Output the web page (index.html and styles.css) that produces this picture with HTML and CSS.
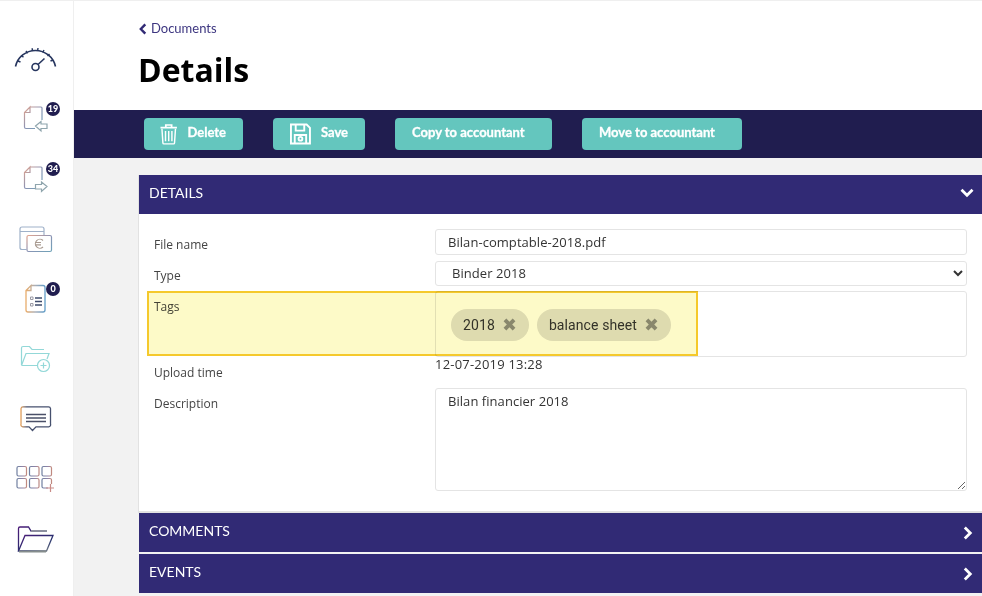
FILE: index.html
```html
<!DOCTYPE html>
<html lang="en">
<head>
<meta charset="utf-8">
<title>Details</title>
<link rel="stylesheet" href="styles.css">
</head>
<body>
<svg class="defs" width="0" height="0" aria-hidden="true">
  <defs>
    <linearGradient id="g1" x1="0" y1="0" x2="1" y2="1"><stop offset="0" stop-color="#e2a48e"/><stop offset=".5" stop-color="#8b93b4"/><stop offset="1" stop-color="#6fa2b8"/></linearGradient>
    <linearGradient id="g2" x1="0" y1="0" x2="1" y2="0"><stop offset="0" stop-color="#e8a35c"/><stop offset=".2" stop-color="#46506e"/><stop offset="1" stop-color="#46506e"/></linearGradient>
    <linearGradient id="g3" x1="0" y1="0" x2="1" y2="0"><stop offset="0" stop-color="#6f7fa0"/><stop offset=".6" stop-color="#8f84a8"/><stop offset="1" stop-color="#c08a80"/></linearGradient>
    <linearGradient id="g4" x1="0" y1="0" x2="1" y2="1"><stop offset="0" stop-color="#4b1a78"/><stop offset=".6" stop-color="#26316e"/><stop offset="1" stop-color="#7f8888"/></linearGradient>
    <linearGradient id="g5" x1="0" y1="0" x2="1" y2="0"><stop offset="0" stop-color="#e9ac6a"/><stop offset=".5" stop-color="#a9aeb8"/><stop offset="1" stop-color="#5f9cc8"/></linearGradient>
  </defs>
</svg>
<aside class="rail">
  <a class="slot">
    <svg class="ico" viewBox="0 28 74 60" fill="none" stroke="#27365f" stroke-width="1.400">
      <path d="M15.500 66.500A20.500 20.500 0 0 1 55.500 66.500" stroke-width="1.600"/>
      <path d="M18 61l2.500 1M21 55.500l2.500 1.700M26 51l1.500 2.300M32 48.300l.7 2.700M38 48l-.4 2.800M44 50l-1.300 2.500M49.500 54l-2 2M53 60l-2.500 1"/>
      <circle cx="35.500" cy="67" r="3.500" stroke-width="1.600"/>
      <path d="M38 64.500L44.500 58.500" stroke-width="1.600"/>
    </svg>
  </a>
  <a class="slot">
    <svg class="ico" viewBox="0 88 74 60" fill="none" stroke="url(#g1)" stroke-width="1.200">
      <path d="M30 107H41a1 1 0 0 1 1 1V120M35 128.500H26a1.500 1.500 0 0 1-1.500-1.500V112.500L30 107V112.500H24.500"/>
      <path d="M35.500 126L41 121.500V124H47V128.500H41V131Z" stroke="#8fa5ad"/>
    </svg>
    <span class="count">19</span>
  </a>
  <a class="slot">
    <svg class="ico" viewBox="0 148 74 60" fill="none" stroke="url(#g1)" stroke-width="1.200">
      <path d="M30 167H41a1 1 0 0 1 1 1V180M35 188.500H26a1.500 1.500 0 0 1-1.500-1.500V172.500L30 167V172.500H24.500"/>
      <path d="M47 186.500L41.500 182V184.500H35.500V189H41.500V191.500Z" stroke="#8fa5ad"/>
    </svg>
    <span class="count">34</span>
  </a>
  <a class="slot">
    <svg class="ico" viewBox="0 208 74 60" fill="none" stroke-width="1.200">
      <path d="M26.500 249.500H22a2 2 0 0 1-2-2V229a2 2 0 0 1 2-2H42a2 2 0 0 1 2 2V235M20.500 231.500H44" stroke="#9fb1c9"/>
      <rect x="27" y="235.500" width="24.500" height="16" rx="1.500" stroke="url(#g1)"/>
      <path d="M43 240.500a4.500 4.500 0 1 0 0 6.500M35 242.500H41M35 244.800H41" stroke="#a89a90"/>
    </svg>
  </a>
  <a class="slot">
    <svg class="ico" viewBox="0 268 74 60" fill="none" stroke="url(#g5)" stroke-width="1.300">
      <path d="M31 285.500H43a2 2 0 0 1 2 2V310a2 2 0 0 1-2 2H28a2 2 0 0 1-2-2V290.500L31 285.500V290.500H26"/>
      <path d="M30.500 297h2.500v2.500h-2.500zM30.500 303.500h2.500v2.500h-2.500z" stroke="#9a9aa4" stroke-width="1"/>
      <path d="M35 298H42M35 301.500H42M35 305H42" stroke="#3f4c6c"/>
    </svg>
    <span class="count">0</span>
  </a>
  <a class="slot">
    <svg class="ico" viewBox="0 328 74 60" fill="none" stroke="#93d8d8" stroke-width="1.200">
      <path d="M21.500 365V348a1.500 1.500 0 0 1 1.500-1.500H29.500L32 349.500H44M21.500 365.500L26 353.500H49L47 359M21.500 365.500H37"/>
      <circle cx="43.500" cy="365.500" r="6"/>
      <path d="M40.500 365.500H46.500M43.500 362.500V368.500"/>
    </svg>
  </a>
  <a class="slot">
    <svg class="ico" viewBox="0 388 74 60" fill="none" stroke-width="1.300">
      <path d="M21 408.500A2 2 0 0 1 23 406.800H48.500A2 2 0 0 1 50.500 408.500V424A2 2 0 0 1 48.500 426.800H36L32.500 430.500L29 426.800H23A2 2 0 0 1 21 424Z" stroke="url(#g2)"/>
      <path d="M26 414.500H46M26 418H46M26 421.500H46" stroke="#4a5068"/>
    </svg>
  </a>
  <a class="slot">
    <svg class="ico" viewBox="0 448 74 60" fill="none" stroke="url(#g3)" stroke-width="1.200">
      <rect x="17" y="466.500" width="9.500" height="9.500" rx="1.500"/>
      <rect x="29.500" y="466.500" width="9.500" height="9.500" rx="1.500"/>
      <rect x="42" y="466.500" width="9.500" height="9.500" rx="1.500"/>
      <rect x="17" y="478.500" width="9.500" height="9.500" rx="1.500"/>
      <rect x="29.500" y="478.500" width="9.500" height="9.500" rx="1.500"/>
      <path d="M48 488H43.500A1.500 1.500 0 0 1 42 486.500V480A1.500 1.500 0 0 1 43.500 478.500H50A1.500 1.500 0 0 1 51.500 480V484"/>
      <path d="M46 488H54M50.500 484V492" stroke="#c98c88"/>
    </svg>
  </a>
  <a class="slot">
    <svg class="ico" viewBox="0 508 74 60" fill="none" stroke="url(#g4)" stroke-width="1.300">
      <path d="M18.500 551V528.500A1.500 1.500 0 0 1 20 527H28.500L31 531H47" />
      <path d="M18.500 551L25 535.500H53L46.500 551Z"/>
      <path d="M19 551.500H46" stroke="#858d8c" stroke-width="2"/>
      <path d="M31 531H47" stroke="#9a9ea2" stroke-width="1.500"/>
    </svg>
  </a>
</aside>

<main class="page">
  <header class="head">
    <a class="back">
      <svg class="back-ico" viewBox="0 0 8 12" aria-hidden="true"><path d="M6.300 1.300L1.800 6L6.300 10.700" fill="none" stroke="#312a75" stroke-width="2.400"/></svg>
      Documents
    </a>
    <h1 class="title">Details</h1>
  </header>

  <div class="toolbar">
    <button class="btn btn-delete" type="button">
      <svg class="btn-ico" viewBox="0 0 18 22" fill="none" stroke="#fff" stroke-width="1.500" aria-hidden="true">
        <path d="M.5 4.500H17.500M6 4V1.700H12V4" stroke-width="1.800"/>
        <path d="M2 5.500L3 20.300A1 1 0 0 0 4 21.200H14A1 1 0 0 0 15 20.300L16 5.500"/>
        <path d="M5.700 8V18.500M9 8V18.500M12.300 8V18.500"/>
      </svg>
      <span class="btn-label">Delete</span>
    </button>
    <button class="btn btn-save" type="button">
      <svg class="btn-ico" viewBox="0 0 22 22" fill="none" stroke="#fff" stroke-width="2" aria-hidden="true">
        <path d="M1 1H17.500L21 4.500V21H1Z"/>
        <path d="M6 1V7.500H15V1M5 21V12H17V21"/>
        <circle cx="11" cy="16" r="2"/>
      </svg>
      <span class="btn-label">Save</span>
    </button>
    <button class="btn btn-copy" type="button"><span class="btn-label">Copy to accountant</span></button>
    <button class="btn btn-move" type="button"><span class="btn-label">Move to accountant</span></button>
  </div>

  <div class="content">
    <section class="panel">
      <div class="bar">
        <span class="bar-label">DETAILS</span>
        <svg class="chev-down" viewBox="0 0 14 10" aria-hidden="true"><path d="M1.500 1.800L7 7.300L12.500 1.800" fill="none" stroke="#fff" stroke-width="2.800"/></svg>
      </div>
      <div class="form">
        <label class="lab">File name</label>
        <input class="field input" type="text" value="Bilan-comptable-2018.pdf">
        <label class="lab lab-type">Type</label>
        <select class="field select"><option>Binder 2018</option></select>
        <label class="lab">Tags</label>
        <div class="field tags">
          <span class="tag">2018<svg class="x" viewBox="0 0 12 12" aria-hidden="true"><path d="M1.800 1.800L10.200 10.200M10.200 1.800L1.800 10.200" stroke="#8a8a8a" stroke-width="3.600"/></svg></span>
          <span class="tag">balance sheet<svg class="x" viewBox="0 0 12 12" aria-hidden="true"><path d="M1.800 1.800L10.200 10.200M10.200 1.800L1.800 10.200" stroke="#8a8a8a" stroke-width="3.600"/></svg></span>
        </div>
        <label class="lab">Upload time</label>
        <div class="value">12-07-2019 13:28</div>
        <label class="lab">Description</label>
        <textarea class="field area">Bilan financier 2018</textarea>
      </div>
    </section>
    <div class="bar bar-c">
      <span class="bar-label">COMMENTS</span>
      <svg class="chev-right" viewBox="0 0 10 14" aria-hidden="true"><path d="M1.800 1.500L7.300 7L1.800 12.500" fill="none" stroke="#fff" stroke-width="2.800"/></svg>
    </div>
    <div class="bar bar-e">
      <span class="bar-label">EVENTS</span>
      <svg class="chev-right" viewBox="0 0 10 14" aria-hidden="true"><path d="M1.800 1.500L7.300 7L1.800 12.500" fill="none" stroke="#fff" stroke-width="2.800"/></svg>
    </div>
  </div>
</main>
<div class="highlight"></div>
</body>
</html>
```

FILE: styles.css
```css
* { box-sizing: border-box; }
html, body { height: 100%; }
body {
  margin: 0;
  display: flex;
  height: 596px;
  overflow: hidden;
  background: #f2f2f2;
  font-family: "Open Sans", sans-serif;
  color: #333;
}
.defs { position: absolute; }

.rail {
  flex: 0 0 74px;
  width: 74px;
  min-width: 0;
  background: #fff;
  border-right: 1px solid #efefef;
  border-top: 1px solid #efefef;
  padding-top: 27px;
  display: flex;
  flex-direction: column;
  overflow: visible;
}
.slot { display: block; position: relative; height: 60px; width: 73px; flex: 0 0 60px; }
.ico { display: block; width: 74px; height: 60px; overflow: visible; }
.count {
  position: absolute;
  left: 46px;
  top: 14px;
  width: 14px;
  height: 14px;
  border-radius: 50%;
  background: #201d4f;
  color: #fff;
  font: 900 9px/14px Lato, sans-serif;
  text-align: center;
}

.page { flex: 1; min-width: 0; display: flex; flex-direction: column; }
.head {
  height: 110px;
  background: #fff;
  border-top: 1px solid #efefef;
  padding: 19px 0 0 65px;
}
.back {
  display: flex;
  align-items: center;
  gap: 4px;
  font: 13px/17px Lato, sans-serif;
  color: #3d3680;
}
.back-ico { width: 8px; height: 12px; }
.title {
  margin: 11px 0 0 -1px;
  font: 700 32px/44px "Open Sans", sans-serif;
  color: #000;
}

.toolbar {
  height: 48px;
  background: #201d4f;
  padding: 8px 0 0 70px;
  display: flex;
  gap: 30px;
  align-items: flex-start;
}
.btn {
  height: 32px;
  border: 0;
  border-radius: 4px;
  background: #64c6be;
  color: #fff;
  font: 700 13px/32px Lato, sans-serif;
  -webkit-text-stroke: .3px #fff;
  display: flex;
  align-items: center;
  padding: 0 17px;
}
.btn-label { position: relative; top: -2px; }
.btn-delete { width: 99px; padding-left: 16px; gap: 10px; }
.btn-save { width: 92px; padding-left: 17px; gap: 10px; }
.btn-delete .btn-ico { width: 18px; height: 22px; }
.btn-save .btn-ico { width: 22px; height: 22px; }
.btn-copy { width: 157px; }
.btn-move { width: 160px; }

.content { padding: 17px 0 0 64px; }
.panel { background: #fff; border-left: 1px solid #e2e2e2; }
.bar {
  height: 39px;
  background: #312a75;
  color: #fff;
  display: flex;
  align-items: center;
  justify-content: space-between;
  padding: 0 8px 0 10px;
  font: 14px/18px Lato, sans-serif;
}
.bar-label { margin-top: -3px; }
.chev-down { width: 14px; height: 10px; margin-top: -3px; }
.chev-right { width: 10px; height: 14px; margin-right: 1px; }
.bar-c, .bar-e { margin-left: 1px; }

.form {
  display: grid;
  grid-template-columns: 281px 532px;
  grid-template-rows: 32px 30px 66px 31px 103px;
  padding: 15px 0 0 15px;
  border-bottom: 2px solid #e2e2e2;
  height: 299px;
  align-content: start;
  align-items: start;
}
.lab { font: 12px/17px "Open Sans", sans-serif; color: #444; padding-top: 7px; }
.lab-type { padding-top: 6px; }
.field {
  width: 532px;
  border: 1px solid #e4e4e4;
  border-radius: 3px;
  background: #fff;
  font: 13px/20px "Open Sans", sans-serif;
  letter-spacing: .05px;
  color: #333;
  padding: 0 12px;
  margin: 0;
  outline: 0;
}
.input { height: 26px; padding-bottom: 1px; }
.select { height: 25px; padding-bottom: 2px; }
.tags { height: 66px; display: flex; align-items: center; gap: 8px; padding: 1px 15px 0; }
.tag {
  height: 32px;
  border-radius: 16px;
  background: #e0e0e0;
  display: flex;
  align-items: center;
  gap: 8px;
  padding: 0 13px 0 12px;
  font: 14px/32px Roboto, sans-serif;
  letter-spacing: .1px;
  color: #333;
}
.x { width: 13px; height: 13px; }
.value {
  font: 13px/17px "Open Sans", sans-serif;
  letter-spacing: .2px;
  color: #333;
  margin-top: -1px;
}
.area { height: 103px; padding-top: 2px; resize: vertical; display: block; }

.bar-e { margin-top: 2px; }

.highlight {
  position: absolute;
  left: 147px;
  top: 291px;
  width: 551px;
  height: 65px;
  background: #fdfac8;
  border: 2px solid #f5c92c;
  mix-blend-mode: multiply;
}
```
